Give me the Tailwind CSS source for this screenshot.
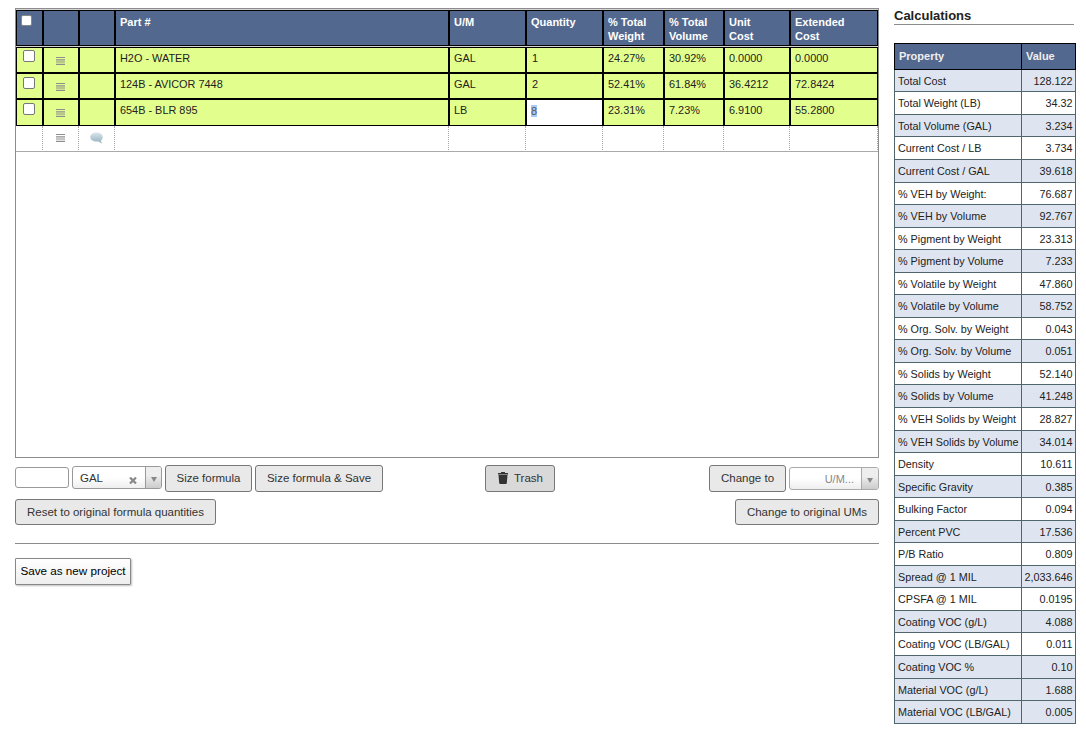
<!DOCTYPE html>
<html lang="en">
<head>
    <meta charset="UTF-8">
    <meta name="viewport" content="width=device-width, initial-scale=1.0">
    <title>Formula</title>
    <script src="https://cdn.jsdelivr.net/npm/@tailwindcss/browser@4"></script>
</head>
<body class="bg-white text-[#222] font-['Liberation_Sans',Arial,sans-serif] text-[11px] leading-[14px] h-[735px] overflow-hidden">
    <div class="flex gap-[15px] pl-[15px] pt-2">
        <main class="w-[864px] shrink-0">
            <div class="h-[450px] border border-[#8c8c8c] bg-white">
                <div id="grid" class="grid grid-cols-[27px_36px_36px_334px_77px_77px_61px_60px_66px_88px] bg-[#d5d5d5]"></div>
            </div>

            <div class="flex items-start mt-[7px] h-[27px] text-[11.5px]">
                <input type="text" aria-label="Size" class="mt-[2px] w-[54px] h-[21px] border border-[#999] rounded-[3px] bg-white">
                <div class="ml-[3px] mt-[1px] flex w-[90px] h-[23px] border border-[#999] rounded-[3px] overflow-hidden bg-linear-to-t from-[#eee] to-white to-50%">
                    <span class="flex-1 pl-[7px] leading-[23px] text-[#333]">GAL</span>
                    <svg class="mt-[10px] mr-[8px] w-[8px] h-[7px]" viewBox="0 0 8 7"><path d="M1 .5 7 6.5M7 .5 1 6.5" stroke="#888" stroke-width="2.2"/></svg>
                    <span class="w-[16px] border-l border-[#999] bg-linear-to-t from-[#ccc] to-[#eee] to-60% flex items-center justify-center">
                        <svg class="mt-[4px] w-[6px] h-[5px]" viewBox="0 0 6 5"><path d="M0 0h6L3 5z" fill="#888"/></svg>
                    </span>
                </div>
                <button class="ml-[3px] w-[87px] h-[27px] pb-[2px] border border-[#777] rounded-[3px] bg-[#e9e9e9] text-[#333]">Size formula</button>
                <button class="ml-[3px] w-[128px] h-[27px] pb-[2px] border border-[#777] rounded-[3px] bg-[#e9e9e9] text-[#333]">Size formula &amp; Save</button>
                <button class="ml-[102px] w-[70px] h-[27px] pb-[2px] border border-[#777] rounded-[3px] bg-[#d9d9d9] text-[#333] flex items-center pl-[12px]">
                    <svg class="w-[10px] h-[12px] mr-[6px]" viewBox="0 0 10 12" fill="#333"><path d="M0 1h3V0h4v1h3v1.400H0zM.5 3h9L8.800 11q0 1-1 1H2.200q-1 0-1-1z"/></svg>Trash
                </button>
                <button class="ml-auto w-[77px] h-[27px] pb-[2px] border border-[#777] rounded-[3px] bg-[#e9e9e9] text-[#333]">Change to</button>
                <div class="ml-[3px] mt-[2px] flex w-[90px] h-[23px] border border-[#aaa] rounded-[3px] overflow-hidden bg-linear-to-t from-[#eee] to-white to-50%">
                    <span class="flex-1 pr-[7px] text-right leading-[23px] text-[11px] text-[#888]">U/M...</span>
                    <span class="w-[17px] border-l border-[#aaa] bg-linear-to-t from-[#ccc] to-[#eee] to-60% flex items-center justify-center">
                        <svg class="mt-[4px] w-[6px] h-[5px]" viewBox="0 0 6 5"><path d="M0 0h6L3 5z" fill="#888"/></svg>
                    </span>
                </div>
            </div>

            <div class="flex justify-between mt-[7px] text-[11.5px] text-[#333]">
                <button class="w-[201px] h-[26px] border border-[#777] rounded-[3px] bg-[#e9e9e9]">Reset to original formula quantities</button>
                <button class="w-[144px] h-[26px] border border-[#777] rounded-[3px] bg-[#e9e9e9]">Change to original UMs</button>
            </div>

            <hr class="mt-[18px] border-[#8c8c8c]">
            <button class="mt-[14px] w-[116px] h-[27px] border border-[#888] rounded-[1px] bg-linear-to-b from-white to-[#eee] shadow-[1px_1px_2px_rgba(0,0,0,0.25)] text-[11.7px] text-black pb-[2px]">Save as new project</button>
        </main>

        <aside class="w-[182px]">
            <h2 class="w-[180px] h-[17px] border-b border-[#8c8c8c] text-[13px] font-bold leading-[16px]">Calculations</h2>
            <div class="mt-[18px] flex h-[27px] border border-black bg-[#53688e] text-[#eee] font-bold leading-[25px]">
                <span class="w-[127px] border-r border-black pl-1">Property</span>
                <span class="pl-1">Value</span>
            </div>
            <div id="calculations" class="mt-[-0.2px] border-x border-[#4f666c] text-[10.8px]"></div>
        </aside>
    </div>

    <script>
        const handle = '<svg class="w-[9px] h-[8px]" viewBox="0 0 9 8"><path d="M0 .5h9M0 2.800h9M0 5h9M0 7.300h9" stroke="#8e8e8e" stroke-width="1.2"/></svg>';
        const bubble = '<svg class="w-[13px] h-[12px]" viewBox="0 0 13 12"><defs><linearGradient id="b" x2="0" y2="1"><stop stop-color="#dbe6ec"/><stop offset="1" stop-color="#92aebd"/></linearGradient></defs><path d="M6.500 .5C10 .5 12.700 2.300 12.700 5c0 1.700-.7 2.800-1.900 3.600l1.200 2.800L8.300 9.500C3.500 10 .3 8 .3 5 .3 2.300 3 .5 6.500 .5z" fill="url(#b)"/></svg>';

        const heads = ['Part #', 'U/M', 'Quantity', '% Total<br>Weight', '% Total<br>Volume', 'Unit<br>Cost', 'Extended<br>Cost'];
        const rows = [
            ['H2O - WATER', 'GAL', '1', '24.27%', '30.92%', '0.0000', '0.0000'],
            ['124B - AVICOR 7448', 'GAL', '2', '52.41%', '61.84%', '36.4212', '72.8424'],
            ['654B - BLR 895', 'LB', '8', '23.31%', '7.23%', '6.9100', '55.2800'],
        ];

        const headCell = 'mt-px mb-px h-[36px] border border-black bg-[#53688e] text-white font-bold';
        const cell = 'h-[26px] border border-black bg-[#e2ff8d] text-[10.9px]';
        const lastCell = 'h-[27px] border border-black bg-[#e2ff8d] text-[10.9px]';
        const editCell = 'h-[27px] border border-black bg-white';
        const emptyCell = 'h-[26px] bg-white border-b border-b-[#aaa] border-r border-r-[#aaa] [border-right-style:dotted]';

        let html = `<div class="${headCell}"><input type="checkbox" aria-label="Select all" class="block appearance-none ml-[4px] mt-[4px] w-[11px] h-[11px] border border-[#888] rounded-[2px] bg-white"></div>`;
        html += `<div class="${headCell}"></div><div class="${headCell}"></div>`;
        heads.forEach(h => html += `<div class="${headCell} pl-[4px] pt-[4px]">${h}</div>`);

        rows.forEach((row, i) => {
            const c = i === 2 ? lastCell : cell;
            html += `<div class="${c} pl-[6px] ${i ? 'pt-[3px]' : 'pt-[2px]'}"><input type="checkbox" aria-label="Select row" class="block appearance-none w-[12px] h-[12px] border border-[#777] rounded-[2px] bg-white"></div>`;
            html += `<div class="${c} pt-[9px] pl-[12px]">${handle}</div><div class="${c}"></div>`;
            row.forEach((v, j) => {
                if (i === 2 && j === 2) html += `<div class="${editCell} pl-[4px] pt-[4px]"><span class="bg-[#a8cbf8] text-[#555]">${v}</span></div>`;
                else html += `<div class="${c} ${j === 2 ? 'pl-[5px]' : 'pl-[4px]'} pt-[3px]">${v}</div>`;
            });
        });

        html += `<div class="${emptyCell}"></div><div class="${emptyCell} pt-[8px] pl-[13px]">${handle}</div><div class="${emptyCell} pt-[6px] pl-[11px]">${bubble}</div>`;
        heads.forEach(() => html += `<div class="${emptyCell}"></div>`);
        document.getElementById('grid').innerHTML = html;

        // third item marks a shaded row
        const calculations = [
            ['Total Cost', '128.122', 1],
            ['Total Weight (LB)', '34.32', 0],
            ['Total Volume (GAL)', '3.234', 1],
            ['Current Cost / LB', '3.734', 0],
            ['Current Cost / GAL', '39.618', 1],
            ['% VEH by Weight:', '76.687', 0],
            ['% VEH by Volume', '92.767', 1],
            ['% Pigment by Weight', '23.313', 0],
            ['% Pigment by Volume', '7.233', 1],
            ['% Volatile by Weight', '47.860', 0],
            ['% Volatile by Volume', '58.752', 1],
            ['% Org. Solv. by Weight', '0.043', 0],
            ['% Org. Solv. by Volume', '0.051', 1],
            ['% Solids by Weight', '52.140', 0],
            ['% Solids by Volume', '41.248', 1],
            ['% VEH Solids by Weight', '28.827', 0],
            ['% VEH Solids by Volume', '34.014', 1],
            ['Density', '10.611', 0],
            ['Specific Gravity', '0.385', 1],
            ['Bulking Factor', '0.094', 0],
            ['Percent PVC', '17.536', 1],
            ['P/B Ratio', '0.809', 0],
            ['Spread @ 1 MIL', '2,033.646', 1],
            ['CPSFA @ 1 MIL', '0.0195', 0],
            ['Coating VOC (g/L)', '4.088', 1],
            ['Coating VOC (LB/GAL)', '0.011', 0],
            ['Coating VOC %', '0.10', 1],
            ['Material VOC (g/L)', '1.688', 1],
            ['Material VOC (LB/GAL)', '0.005', 1],
        ];
        document.getElementById('calculations').innerHTML = calculations.map(([name, value, shaded]) =>
            `<div class="flex h-[22.56px] border-b border-[#4f666c] leading-[22px] ${shaded ? 'bg-[#dfe5f0]' : 'bg-white'}">
                <span class="w-[127px] border-r border-[#4f666c] pl-[3px] whitespace-nowrap">${name}</span>
                <span class="flex-1 pr-[2.5px] text-right">${value}</span>
            </div>`).join('');
    </script>
</body>
</html>
